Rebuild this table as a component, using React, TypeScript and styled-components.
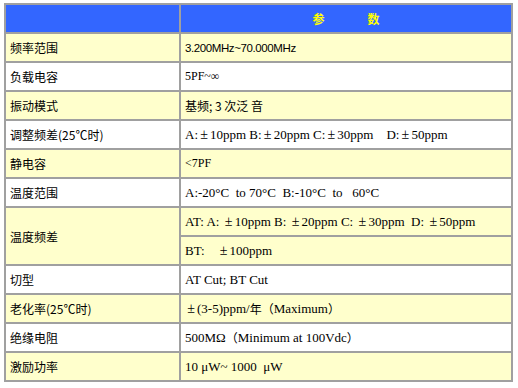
import React from "react";
import styled, { createGlobalStyle } from "styled-components";

const Global = createGlobalStyle`
  html, body { margin: 0; padding: 0; background: #ffffff; }
  body { font-family: "Noto Sans CJK SC", "Liberation Sans", sans-serif; }
`;

const Page = styled.div`
  padding: 3px 0 0 4px;
`;

const Table = styled.div`
  width: 509px;
  box-sizing: border-box;
  border: 1px solid #a0a0a0;
  display: grid;
  grid-template-columns: 175px 332px;
  grid-auto-rows: 29px;
`;

const Cell = styled.div<{ $bg: string; $span?: number }>`
  box-sizing: border-box;
  border: 1px solid #a0a0a0;
  background: ${(p) => p.$bg};
  display: flex;
  align-items: center;
  overflow: hidden;
  white-space: pre;
  color: #000;
  ${(p) => (p.$span ? `grid-row: span ${p.$span};` : "")}
`;

const Label = styled(Cell)`
  padding-left: 4px;
  font-family: "Noto Sans CJK SC", sans-serif;
  font-size: 12px;
`;

const Value = styled(Cell)<{ $font?: "serif" | "narrow" | "cjk" | "small" }>`
  padding-left: 4px;
  font-family: ${(p) =>
    p.$font === "narrow"
      ? `"Liberation Sans", sans-serif`
      : p.$font === "cjk"
      ? `"Noto Sans CJK SC", sans-serif`
      : `"Liberation Serif", "Noto Sans CJK SC", serif`};
  font-size: ${(p) =>
    p.$font === "narrow" ? "11.5px" : p.$font === "cjk" ? "12px" : p.$font === "small" ? "12px" : "13px"};
  letter-spacing: ${(p) => (p.$font === "narrow" ? "-0.4px" : "0")};
`;

const PlusMinus = styled.span`
  display: inline-block;
  width: 12px;
  text-align: center;
  font-family: "Liberation Serif", serif;
  font-size: 14px;
`;

const Cjk = styled.span`
  font-family: "Noto Sans CJK SC", sans-serif;
  font-size: 12px;
`;

const HeaderCell = styled(Cell)`
  background: #3366ff;
  justify-content: center;
  gap: 43px;
  color: #ffff00;
  font-weight: bold;
  font-size: 12px;
  font-family: "Noto Sans CJK SC", sans-serif;
`;

const YELLOW = "#ffffcc";
const WHITE = "#ffffff";

function rich(text: string) {
  const parts = text.split(/(±|年|（|）)/);
  return parts.map((p, i) =>
    p === "±" ? (
      <PlusMinus key={i}>±</PlusMinus>
    ) : p === "年" || p === "（" || p === "）" ? (
      <Cjk key={i}>{p}</Cjk>
    ) : (
      <React.Fragment key={i}>{p}</React.Fragment>
    )
  );
}

type Font = "serif" | "narrow" | "cjk" | "small";
type Row = { label: string; value: string; font?: Font };

const rows: Row[] = [
  { label: "频率范围", value: "3.200MHz~70.000MHz", font: "narrow" },
  { label: "负载电容", value: "5PF~∞", font: "small" },
  { label: "振动模式", value: "基频; 3 次泛 音", font: "cjk" },
  { label: "调整频差(25℃时)", value: "A:±10ppm B:±20ppm C:±30ppm    D:±50ppm" },
  { label: "静电容", value: "<7PF", font: "small" },
  { label: "温度范围", value: "A:-20°C  to 70°C  B:-10°C  to   60°C" },
];

const rowsAfter: Row[] = [
  { label: "切型", value: "AT Cut; BT Cut" },
  { label: "老化率(25℃时)", value: "±(3-5)ppm/年（Maximum）" },
  { label: "绝缘电阻", value: "500MΩ（Minimum at 100Vdc）" },
  { label: "激励功率", value: "10 μW~ 1000  μW" },
];

export default function App() {
  return (
    <>
      <Global />
      <Page>
        <Table>
          <Cell $bg="#3366ff" />
          <HeaderCell $bg="#3366ff">
            <span>参</span>
            <span>数</span>
          </HeaderCell>
          {rows.map((r, i) => {
            const bg = i % 2 === 0 ? YELLOW : WHITE;
            return (
              <React.Fragment key={r.label}>
                <Label $bg={bg}>{r.label}</Label>
                <Value $bg={bg} $font={r.font}>{rich(r.value)}</Value>
              </React.Fragment>
            );
          })}
          <Label $bg={YELLOW} $span={2}>温度频差</Label>
          <Value $bg={YELLOW}>{rich("AT: A: ±10ppm B: ±20ppm C: ±30ppm  D: ±50ppm")}</Value>
          <Value $bg={YELLOW}>{rich("BT:    ±100ppm")}</Value>
          {rowsAfter.map((r, i) => {
            const bg = i % 2 === 0 ? WHITE : YELLOW;
            return (
              <React.Fragment key={r.label}>
                <Label $bg={bg}>{r.label}</Label>
                <Value $bg={bg} $font={r.font}>{rich(r.value)}</Value>
              </React.Fragment>
            );
          })}
        </Table>
      </Page>
    </>
  );
}
